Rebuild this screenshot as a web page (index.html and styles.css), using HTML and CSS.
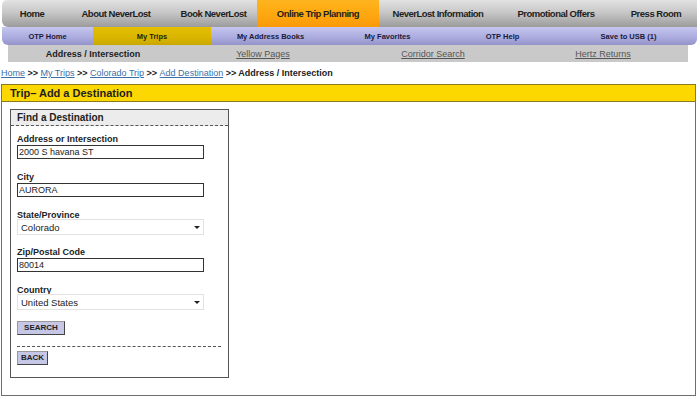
FILE: index.html
```html
<!DOCTYPE html>
<html lang="en">
<head>
    <meta charset="UTF-8">
    <title>Trip - Add a Destination</title>
    <link rel="stylesheet" href="styles.css">
</head>
<body>
    <div class="main-nav">
        <a class="nav-home">Home</a>
        <a class="nav-about">About NeverLost</a>
        <a class="nav-book">Book NeverLost</a>
        <a class="nav-otp active">Online Trip Planning</a>
        <a class="nav-info">NeverLost Information</a>
        <a class="nav-promo">Promotional Offers</a>
        <a class="nav-press">Press Room</a>
    </div>
    <div class="sub-nav">
        <a class="sub-home">OTP Home</a>
        <a class="sub-trips active">My Trips</a>
        <a class="sub-books">My Address Books</a>
        <a class="sub-fav">My Favorites</a>
        <a class="sub-help">OTP Help</a>
        <a class="sub-usb">Save to USB (1)</a>
    </div>
    <div class="search-nav">
        <span class="current">Address / Intersection</span>
        <a>Yellow Pages</a>
        <a>Corridor Search</a>
        <a>Hertz Returns</a>
    </div>

    <div class="breadcrumb">
        <a>Home</a> &gt;&gt; <a>My Trips</a> &gt;&gt; <a>Colorado Trip</a> &gt;&gt; <a>Add Destination</a> &gt;&gt; Address / Intersection
    </div>

    <div class="panel">
        <div class="panel-title">Trip&ndash; Add a Destination</div>
        <div class="find-box">
            <div class="find-title">Find a Destination</div>
            <form class="find-form">
                <div class="field">
                    <label for="address">Address or Intersection</label>
                    <input type="text" id="address" value="2000 S havana ST">
                </div>
                <div class="field">
                    <label for="city">City</label>
                    <input type="text" id="city" value="AURORA">
                </div>
                <div class="field field-select">
                    <label for="state">State/Province</label>
                    <span class="select-wrap">
                        <select id="state"><option>Colorado</option></select>
                    </span>
                </div>
                <div class="field">
                    <label for="zip">Zip/Postal Code</label>
                    <input type="text" id="zip" value="80014">
                </div>
                <div class="field field-select">
                    <label for="country">Country</label>
                    <span class="select-wrap">
                        <select id="country"><option>United States</option></select>
                    </span>
                </div>
                <button type="button" class="btn btn-search">SEARCH</button>
                <div class="divider"></div>
                <button type="button" class="btn btn-back">BACK</button>
            </form>
        </div>
    </div>
</body>
</html>
```

FILE: styles.css
```css
body {
    margin: 0;
    font-family: "Liberation Sans", Arial, sans-serif;
    color: #222;
    background: #fff;
    width: 700px;
}
a {
    cursor: pointer;
}

/* top navigation */
.main-nav {
    display: flex;
    height: 27px;
    margin: 0 3px 0 2px;
    border-radius: 5px 0 0 6px;
    background: linear-gradient(#e2e2e2, #c8c8c8 45%, #9b9b9b);
    overflow: hidden;
}
.main-nav a {
    display: flex;
    align-items: center;
    justify-content: center;
    font-size: 9.5px;
    letter-spacing: -0.5px;
    font-weight: bold;
    color: #1e1e1e;
}
.nav-home { width: 60px; }
.nav-about { width: 108px; }
.nav-book { width: 87px; }
.nav-otp { width: 122px; }
.nav-info { width: 118px; }
.nav-promo { width: 118px; }
.nav-press { flex: 1; }
.main-nav a.active {
    background: linear-gradient(#fdb41e, #ffa810 50%, #f99a08);
}

.sub-nav {
    display: flex;
    height: 18px;
    margin: 0 3px 0 2px;
    border-radius: 0 0 6px 6px;
    background: linear-gradient(#c6c6f0, #aaaadd 60%, #9494ca);
    overflow: hidden;
}
.sub-nav a {
    display: flex;
    align-items: center;
    justify-content: center;
    font-size: 7.5px;
    font-weight: bold;
    color: #1a1a3a;
}
.sub-home { width: 91px; }
.sub-trips { width: 118px; }
.sub-books { width: 119px; }
.sub-fav { width: 115px; }
.sub-help { width: 115px; }
.sub-usb { flex: 1; }
.sub-nav a.active {
    background: linear-gradient(#e4bf00, #d9b500 60%, #caa700);
    color: #2a2200;
}

.search-nav {
    display: grid;
    grid-template-columns: repeat(4, 1fr);
    height: 17px;
    width: 680px;
    margin-left: 8px;
    background: #c9c9c9;
    font-size: 9px;
}
.search-nav span,
.search-nav a {
    display: flex;
    align-items: center;
    justify-content: center;
}
.search-nav .current {
    font-weight: bold;
    color: #222;
}
.search-nav a {
    color: #555;
    text-decoration: underline;
}

.breadcrumb {
    margin: 5px 0 0 1px;
    height: 17px;
    line-height: 12px;
    font-size: 9px;
    font-weight: bold;
    color: #222;
}
.breadcrumb a {
    font-weight: normal;
    color: #3a6fa8;
    text-decoration: underline;
}

/* content panel */
.panel {
    margin-left: 1px;
    width: 693px;
    height: 311px;
    border: 1px solid #6e6e6e;
    border-top: none;
}
.panel-title {
    height: 16px;
    line-height: 16px;
    margin: 0 -1px;
    padding-left: 8px;
    background: #fdd700;
    border: 1px solid #8a7a20;
    font-size: 11px;
    font-weight: bold;
    color: #1e1e1e;
}
.find-box {
    margin: 7px 0 0 8px;
    width: 217px;
    height: 267px;
    border: 1px solid #555;
}
.find-title {
    height: 15px;
    line-height: 16px;
    padding-left: 6px;
    background: #ececec;
    border-bottom: 1px dashed #555;
    font-size: 10px;
    font-weight: bold;
}
.find-form {
    display: flex;
    flex-direction: column;
    align-items: flex-start;
    padding: 6px 0 0 6px;
}
.field {
    margin-bottom: 11px;
}
.field label {
    display: block;
    height: 12px;
    line-height: 15px;
    font-size: 9px;
    font-weight: bold;
    color: #222;
}
.field input {
    display: block;
    box-sizing: border-box;
    width: 187px;
    height: 14px;
    margin: 1px 0 0;
    padding: 0 1px;
    border: 1px solid #333;
    font-family: "Liberation Sans", Arial, sans-serif;
    font-size: 9px;
    color: #222;
}
.field-select {
    margin-bottom: 10px;
}
.select-wrap {
    position: relative;
    display: block;
    width: 187px;
    margin-top: -1px;
}
.select-wrap select {
    display: block;
    box-sizing: border-box;
    width: 187px;
    height: 16px;
    padding: 0 3px;
    border: 1px solid #e2e2e2;
    background: #fff;
    appearance: none;
    -webkit-appearance: none;
    font-family: "Liberation Sans", Arial, sans-serif;
    font-size: 9.5px;
    color: #222;
}
.select-wrap::after {
    content: "";
    position: absolute;
    right: 4px;
    top: 7px;
    border-left: 3px solid transparent;
    border-right: 3px solid transparent;
    border-top: 3px solid #222;
}
.btn {
    display: block;
    height: 14px;
    padding: 0 6px;
    background: #c6c6e6;
    border: 1px solid #555;
    border-color: #999 #444 #444 #999;
    font-family: "Liberation Sans", Arial, sans-serif;
    font-size: 8px;
    font-weight: bold;
    color: #222;
    line-height: 12px;
}
.btn-search {
    width: 48px;
    margin-top: 1px;
}
.btn-back {
    width: 31px;
    padding: 0;
}
.divider {
    width: 204px;
    margin: 11px 0 4px;
    border-top: 1px dashed #555;
}
```
